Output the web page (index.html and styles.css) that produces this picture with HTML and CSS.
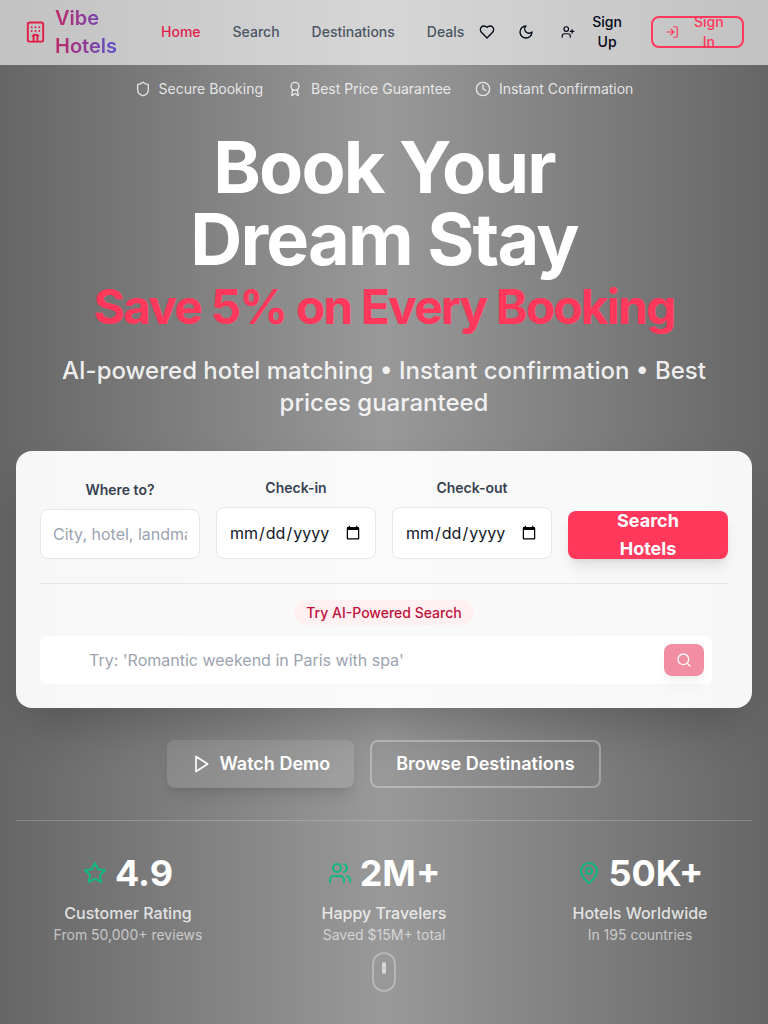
FILE: index.html
```html
<!DOCTYPE html>
<html lang="en">
<head>
<meta charset="utf-8">
<title>Vibe Hotels</title>
<link rel="stylesheet" href="styles.css">
</head>
<body>
<header class="header">
  <a class="brand">
    <svg class="icon brand-icon" viewBox="0 0 24 24"><path d="M10 22v-6.57M12 11h.01M12 7h.01M14 15.43V22M15 16a5 5 0 0 0-6 0M16 11h.01M16 7h.01M8 11h.01M8 7h.01"/><rect x="4" y="2" width="16" height="20" rx="2"/></svg>
    <span class="brand-name">Vibe<br>Hotels</span>
  </a>
  <nav class="nav"><a class="active">Home</a><a>Search</a><a>Destinations</a><a>Deals</a></nav>
  <div class="actions">
    <svg class="icon small" viewBox="0 0 24 24"><path d="M19 14c1.49-1.46 3-3.21 3-5.5A5.5 5.5 0 0 0 16.500 3c-1.760 0-3 .5-4.500 2-1.500-1.500-2.740-2-4.500-2A5.500 5.500 0 0 0 2 8.500c0 2.300 1.500 4.050 3 5.500l7 7Z"/></svg>
    <svg class="icon small" viewBox="0 0 24 24"><path d="M12 3a6 6 0 0 0 9 9 9 9 0 1 1-9-9Z"/></svg>
    <a class="sign-up">
      <svg class="icon mini" viewBox="0 0 24 24"><path d="M16 21v-2a4 4 0 0 0-4-4H6a4 4 0 0 0-4 4v2"/><circle cx="9" cy="7" r="4"/><path d="M19 8v6M22 11h-6"/></svg>
      <span>Sign<br>Up</span>
    </a>
    <a class="sign-in">
      <svg class="icon mini" viewBox="0 0 24 24"><path d="M15 3h4a2 2 0 0 1 2 2v14a2 2 0 0 1-2 2h-4M10 17l5-5-5-5M15 12H3"/></svg>
      <span>Sign<br>In</span>
    </a>
  </div>
</header>
<main class="hero">
  <div class="trust">
    <span><svg class="icon small" viewBox="0 0 24 24"><path d="M20 13c0 5-3.500 7.500-7.660 8.950a1 1 0 0 1-.67-.01C7.500 20.500 4 18 4 13V6a1 1 0 0 1 1-1c2 0 4.500-1.200 6.240-2.720a1.170 1.170 0 0 1 1.520 0C14.510 3.810 17 5 19 5a1 1 0 0 1 1 1z"/></svg>Secure Booking</span>
    <span><svg class="icon small" viewBox="0 0 24 24"><path d="m15.477 12.890 1.515 8.526a.5.5 0 0 1-.81.470l-3.580-2.687a1 1 0 0 0-1.197 0l-3.586 2.686a.5.5 0 0 1-.81-.469l1.514-8.526"/><circle cx="12" cy="8" r="6"/></svg>Best Price Guarantee</span>
    <span><svg class="icon small" viewBox="0 0 24 24"><circle cx="12" cy="12" r="10"/><path d="M12 6v6l4 2"/></svg>Instant Confirmation</span>
  </div>
  <h1 class="title">Book Your<br>Dream Stay<span class="offer">Save 5% on Every Booking</span></h1>
  <p class="subtitle">AI-powered hotel matching • Instant confirmation • Best prices guaranteed</p>
  <section class="card">
    <form class="fields">
      <label class="field">Where to?<input class="input place" type="text" placeholder="City, hotel, landmark"></label>
      <label class="field">Check-in<input class="input date" type="date"></label>
      <label class="field">Check-out<input class="input date" type="date"></label>
      <button class="search-button" type="button">Search<br>Hotels</button>
    </form>
    <div class="ai">
      <span class="pill">Try AI-Powered Search</span>
      <div class="ai-box">
        <input class="ai-input" type="text" placeholder="Try: 'Romantic weekend in Paris with spa'">
        <button class="ai-button" type="button"><svg class="icon small" viewBox="0 0 24 24"><circle cx="11" cy="11" r="8"/><path d="m21 21-4.300-4.300"/></svg></button>
      </div>
    </div>
  </section>
  <div class="ctas">
    <a class="cta demo"><svg class="icon play" viewBox="0 0 24 24"><path d="m6 3 14 9-14 9z"/></svg>Watch Demo</a>
    <a class="cta browse">Browse Destinations</a>
  </div>
  <section class="stats">
    <div class="stat">
      <div class="number"><svg class="icon stat-icon" viewBox="0 0 24 24"><path d="m12 2 3.090 6.260L22 9.270l-5 4.870 1.180 6.880L12 17.770l-6.180 3.250L7 14.140 2 9.270l6.910-1.010z"/></svg>4.9</div>
      <div class="stat-label">Customer Rating</div><div class="stat-note">From 50,000+ reviews</div>
    </div>
    <div class="stat">
      <div class="number"><svg class="icon stat-icon" viewBox="0 0 24 24"><path d="M16 21v-2a4 4 0 0 0-4-4H6a4 4 0 0 0-4 4v2"/><circle cx="9" cy="7" r="4"/><path d="M22 21v-2a4 4 0 0 0-3-3.870M16 3.130a4 4 0 0 1 0 7.750"/></svg>2M+</div>
      <div class="stat-label">Happy Travelers</div><div class="stat-note">Saved $15M+ total</div>
    </div>
    <div class="stat">
      <div class="number"><svg class="icon stat-icon" viewBox="0 0 24 24"><path d="M20 10c0 4.993-5.539 10.193-7.399 11.799a1 1 0 0 1-1.202 0C9.539 20.193 4 14.993 4 10a8 8 0 0 1 16 0"/><circle cx="12" cy="10" r="3"/></svg>50K+</div>
      <div class="stat-label">Hotels Worldwide</div><div class="stat-note">In 195 countries</div>
    </div>
  </section>
  <div class="scroll-hint"><span class="wheel"></span></div>
</main>
</body>
</html>
```

FILE: styles.css
```css
* { box-sizing: border-box; }
body {
  margin: 0;
  height: 1024px;
  overflow: hidden;
  font-family: Inter, sans-serif;
  color: #fff;
  background: linear-gradient(90deg, #666, #999, #666);
}
.icon { fill: none; stroke: currentColor; stroke-width: 2; stroke-linecap: round; stroke-linejoin: round; flex: none; }
.small { width: 16px; height: 16px; }
.mini { width: 14px; height: 14px; }

.header {
  display: flex;
  align-items: center;
  height: 65px;
  padding: 0 24px 1px;
  background: rgba(255, 255, 255, .6);
  font-size: 14px;
  font-weight: 500;
  line-height: 20px;
}
.brand { display: flex; align-items: center; gap: 8px; width: 137px; }
.brand-icon { width: 23px; height: 24px; color: #e11d48; }
.brand-name {
  font-size: 20px;
  line-height: 28px;
  font-weight: 600;
  color: transparent;
  background: linear-gradient(90deg, #be2a68, #5b50cc);
  -webkit-background-clip: text;
  background-clip: text;
}
.nav { display: flex; gap: 32px; color: #4b5563; }
.active { color: #e11d48; }
.actions { display: flex; align-items: center; flex: 1; margin-left: 15px; gap: 23px; color: #020817; }
.sign-up { display: flex; align-items: center; gap: 17px; margin-left: 4px; text-align: center; }
.sign-in {
  display: flex;
  align-items: center;
  gap: 15px;
  width: 93px;
  height: 32px;
  margin-left: auto;
  padding-left: 12px;
  overflow: hidden;
  border: 2px solid #ff385c;
  border-radius: 8px;
  color: #ff385c;
  text-align: center;
}

.hero { padding: 14px 16px 0; text-align: center; }
.trust { display: flex; justify-content: center; gap: 24px; font-size: 14px; line-height: 20px; color: rgba(255, 255, 255, .8); }
.trust span { display: flex; align-items: center; gap: 8px; }
.title { margin: 32px 0 0; font-size: 72px; line-height: 72px; font-weight: 700; letter-spacing: -.025em; }
.offer { display: block; margin-top: 8px; font-size: 48px; line-height: 48px; letter-spacing: -1.87px; color: #ff385c; }
.subtitle { max-width: 672px; margin: 24px auto 32px; font-size: 24px; line-height: 32px; font-weight: 500; color: rgba(255, 255, 255, .9); }

.card { height: 257px; padding: 24px; border-radius: 16px; background: rgba(255, 255, 255, .95); box-shadow: 0 25px 50px -12px rgba(0, 0, 0, .25); }
.fields { display: grid; grid-template-columns: repeat(4, minmax(0, 1fr)); gap: 16px; align-items: end; height: 84px; }
.field { display: grid; grid-template-columns: minmax(0, 1fr); gap: 9px; font-size: 14px; line-height: 20px; font-weight: 600; color: #374151; }
.input { width: 100%; min-width: 0; border: 1px solid #e5e7eb; border-radius: 8px; padding: 12px; background: #fff; font: 16px/24px Inter, sans-serif; color: #111827; }
.place { height: 50px; }
.date { height: 52px; }
.input::placeholder, .ai-input::placeholder { color: #9ca3af; }
.search-button {
  display: flex;
  align-items: center;
  justify-content: center;
  height: 48px;
  border: 0;
  border-radius: 8px;
  background: #ff385c;
  color: #fff;
  font: 700 18px/28px Inter, sans-serif;
  box-shadow: 0 10px 15px -3px rgba(0, 0, 0, .1), 0 4px 6px -4px rgba(0, 0, 0, .1);
}
.ai { display: flex; flex-direction: column; align-items: center; margin-top: 24px; padding-top: 16px; border-top: 1px solid #e5e7eb; }
.pill { height: 25px; padding: 0 12px; border-radius: 13px; background: #fff0f2; color: #be123c; font-size: 14px; line-height: 26px; font-weight: 500; }
.ai-box { display: flex; align-items: center; align-self: flex-start; width: 672px; height: 48px; margin-top: 11px; padding: 0 8px 0 49px; border-radius: 6px; background: #fff; }
.ai-input { flex: 1; border: 0; padding: 0; background: transparent; font: 16px/24px Inter, sans-serif; }
.ai-button { display: flex; align-items: center; justify-content: center; width: 40px; height: 32px; padding: 0; border: 0; border-radius: 8px; background: #f28ea3; color: #fff; box-shadow: 0 10px 15px -3px rgba(0, 0, 0, .05), 0 4px 6px -4px rgba(0, 0, 0, .05); }

.ctas { display: flex; justify-content: center; gap: 16px; margin: 32px 0; }
.cta { display: flex; align-items: center; height: 48px; border-radius: 8px; font-size: 18px; line-height: 28px; font-weight: 600; }
.demo { gap: 8px; padding: 0 24px; background: rgba(255, 255, 255, .1); box-shadow: 0 10px 15px -3px rgba(0, 0, 0, .1), 0 4px 6px -4px rgba(0, 0, 0, .1); }
.play { width: 20px; height: 20px; }
.browse { padding: 0 24px; border: 2px solid rgba(255, 255, 255, .3); }

.stats { display: grid; grid-template-columns: repeat(3, 1fr); gap: 32px; padding-top: 32px; border-top: 1px solid rgba(255, 255, 255, .2); }
.stat { min-width: 0; }
.number { display: flex; align-items: center; justify-content: center; gap: 8px; font-size: 36px; line-height: 40px; font-weight: 700; }
.stat-icon { width: 24px; height: 24px; color: #10b981; }
.stat-label { margin-top: 8px; font-size: 16px; line-height: 24px; font-weight: 500; color: rgba(255, 255, 255, .8); }
.stat-note { font-size: 14px; line-height: 20px; color: rgba(255, 255, 255, .6); }
.scroll-hint { width: 24px; height: 40px; margin: 7px auto 0; padding-top: 8px; border: 2px solid rgba(255, 255, 255, .3); border-radius: 12px; }
.wheel { display: block; width: 4px; height: 12px; margin: 0 auto; border-radius: 2px; background: rgba(255, 255, 255, .6); }
```
